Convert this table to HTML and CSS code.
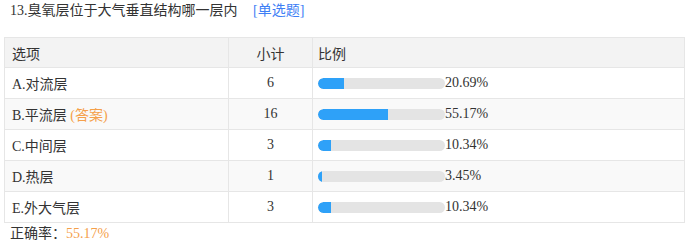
FILE: index.html
```html
<!DOCTYPE html>
<html lang="zh">
<head>
<meta charset="utf-8">
<link rel="stylesheet" href="styles.css">
</head>
<body>
<div class="q">
  <div class="title">13.臭氧层位于大气垂直结构哪一层内 <span class="type">[单选题]</span></div>
  <table class="stats">
    <thead>
      <tr><th class="c-opt">选项</th><th class="c-cnt">小计</th><th class="c-pct">比例</th></tr>
    </thead>
    <tbody>
      <tr><td class="c-opt">A.对流层</td><td class="c-cnt">6</td><td class="c-pct"><div class="bar-wrap"><div class="bar"><div class="fill" style="width:20.69%"></div></div><span>20.69%</span></div></td></tr>
      <tr class="alt"><td class="c-opt">B.平流层 <span class="ans">(答案)</span></td><td class="c-cnt">16</td><td class="c-pct"><div class="bar-wrap"><div class="bar"><div class="fill" style="width:55.17%"></div></div><span>55.17%</span></div></td></tr>
      <tr><td class="c-opt">C.中间层</td><td class="c-cnt">3</td><td class="c-pct"><div class="bar-wrap"><div class="bar"><div class="fill" style="width:10.34%"></div></div><span>10.34%</span></div></td></tr>
      <tr class="alt"><td class="c-opt">D.热层</td><td class="c-cnt">1</td><td class="c-pct"><div class="bar-wrap"><div class="bar"><div class="fill" style="width:3.45%"></div></div><span>3.45%</span></div></td></tr>
      <tr><td class="c-opt">E.外大气层</td><td class="c-cnt">3</td><td class="c-pct"><div class="bar-wrap"><div class="bar"><div class="fill" style="width:10.34%"></div></div><span>10.34%</span></div></td></tr>
    </tbody>
  </table>
  <div class="rate">正确率：<span class="ans">55.17%</span></div>
</div>
</body>
</html>
```
FILE: styles.css
```css
html, body {
  margin: 0;
  padding: 0;
  background: #fff;
}
body {
  font-family: "Liberation Serif", "Noto Sans CJK SC", sans-serif;
  font-size: 14px;
  color: #333;
}
.q {
  padding: 0 4px;
}
.title {
  height: 22px;
  line-height: 22px;
  padding-left: 6px;
  margin-bottom: 15px;
}
.type {
  color: #3d7ef5;
  margin-left: 12px;
}
.stats {
  border-collapse: collapse;
  width: 680px;
  table-layout: fixed;
}
.stats th, .stats td {
  border: 1px solid #e6e6e6;
  height: 30px;
  padding: 0 0 0 7px;
  font-weight: normal;
  text-align: left;
  vertical-align: middle;
  box-sizing: border-box;
}
.stats thead th {
  background: #f3f3f3;
  height: 30px;
}
.stats tbody td {
  height: 31px;
}
.stats tr.alt td {
  background: #f9f9f9;
}
.c-opt { width: 224px; }
.c-cnt { width: 84px; }
.stats .c-cnt { text-align: center; padding: 0; }
.c-pct { width: 372px; }
.stats .c-pct { padding-left: 5px; }
.bar-wrap {
  display: flex;
  align-items: center;
}
.bar {
  width: 127px;
  height: 11px;
  border-radius: 6px;
  background: #e4e4e4;
  overflow: hidden;
}
.fill {
  height: 100%;
  background: #2ea1f8;
  border-radius: 6px 0 0 6px;
}
.ans {
  color: #f5a04a;
}
.rate {
  padding-left: 6px;
  line-height: 20px;
  margin-top: 1px;
}
```
